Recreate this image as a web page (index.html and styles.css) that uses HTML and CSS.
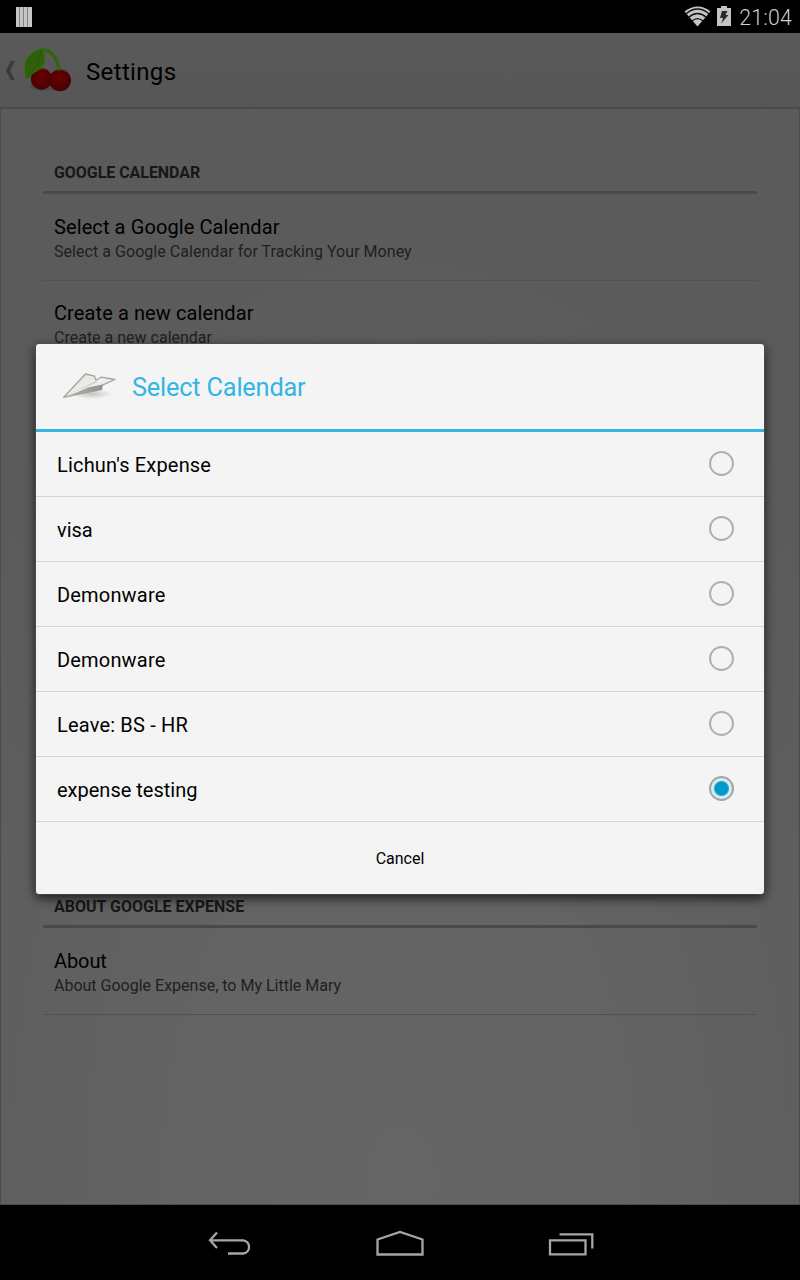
FILE: index.html
```html
<!DOCTYPE html>
<html lang="en">
<head>
<meta charset="utf-8">
<title>Settings</title>
<link rel="stylesheet" href="styles.css">
</head>
<body>
<div class="screen">
  <header class="status">
    <svg class="bars" width="18" height="22" viewBox="0 0 18 22"><path fill="#c6c6c6" d="M1 1h16v20H1z"/><path stroke="#808080" stroke-width="1" d="M4.500 1v20M8.500 1v20M12.500 1v20"/></svg>
    <div class="tray">
      <svg width="28" height="22" viewBox="0 0 28 22"><path fill="#c4c4c4" d="M.500 5.500Q14-4.500 26.500 5.500L13.500 20.500z"/><g fill="none" stroke="#111" stroke-width="1.300"><path d="M1.500 8.200Q13.500-2.200 25.500 8.200"/><path d="M4.500 11.400Q13.500 3.600 22.500 11.400"/><path d="M8 15Q13.500 10.200 19 15"/></g></svg>
      <svg width="14" height="22" viewBox="0 0 14 22"><path fill="#c4c4c4" d="M4 0h6v2h4v18H0V2h4z"/><path fill="#2a2a2a" d="M5 5h5.500L8.500 9H11.500L4.200 17.500 6.200 12H3z"/></svg>
      <span class="clock">21:04</span>
    </div>
  </header>
  <div class="actionbar">
    <svg class="up" width="10" height="20" viewBox="0 0 10 20"><path fill="#3a3a3a" d="M6 0H9.800L5 9.700l4.800 9.600H6L1 9.700z"/></svg>
    <svg class="logo" width="50" height="48" viewBox="0 0 50 48">
      <defs>
        <radialGradient id="cherry" cx=".5" cy=".4" r=".6"><stop offset="0" stop-color="#690101"/><stop offset=".75" stop-color="#510000"/><stop offset="1" stop-color="#3b0808"/></radialGradient>
        <linearGradient id="leaf" x1="0" y1="0" x2="1" y2="1"><stop offset="0" stop-color="#2d5a12"/><stop offset="1" stop-color="#2e6803"/></linearGradient>
      </defs>
      <ellipse cx="22" cy="39" rx="15" ry="5" fill="#4c4c4c"/>
      <circle cx="18.500" cy="32" r="10.700" fill="url(#cherry)"/>
      <circle cx="37" cy="33.300" r="11" fill="url(#cherry)"/>
      <path d="M12 23.500q5-2.500 10-1.500M31 24.300q6-4 12 .5" stroke="#5e3030" stroke-width="1" fill="none"/>
      <path d="M19 2.500C29 3.500 34.500 11 36.300 23.500" fill="none" stroke="#2f6504" stroke-width="3"/>
      <path d="M19.500 1C10 4 1 10 1.500 21c.2 5 1.300 9 2.800 12C8 24 20 24 21.800 14 22.200 8 21 3 19.500 1z" fill="url(#leaf)" stroke="#376e16" stroke-width="1"/>
      <path d="M19 3Q15 19 5 31" fill="none" stroke="#2a550d" stroke-width="1"/>
    </svg>
    <h1 class="heading">Settings</h1>
  </div>
  <main class="content">
    <h2 class="category">GOOGLE CALENDAR</h2>
    <div class="pref"><div class="name">Select a Google Calendar</div><div class="summary long">Select a Google Calendar for Tracking Your Money</div></div>
    <div class="pref second"><div class="name">Create a new calendar</div><div class="summary">Create a new calendar</div></div>
    <h2 class="category about">ABOUT GOOGLE EXPENSE</h2>
    <div class="pref"><div class="name tight">About</div><div class="summary">About Google Expense, to My Little Mary</div></div>
  </main>
  <nav class="nav">
    <svg width="46" height="26" viewBox="0 0 46 26" fill="none" stroke="#a6a6a6" stroke-width="2.300"><path d="M11 1.500 4 9.300 11 17M4 9.300h33.500a6.700 6.700 0 0 1 0 13.200H22"/></svg>
    <svg width="50" height="28" viewBox="0 0 50 28" fill="none" stroke="#a6a6a6" stroke-width="2.300"><path d="M2.500 24.500V9.500L25 2l22.500 7.500v15z"/></svg>
    <svg width="46" height="26" viewBox="0 0 46 26" fill="none" stroke="#a6a6a6" stroke-width="2.300"><path d="M2 9.300h35.500v14H2zM11.500 3.300h32.800v14.200"/></svg>
  </nav>
  <section class="dialog">
    <div class="title">
      <svg width="60" height="34" viewBox="0 0 60 34">
        <defs><linearGradient id="wing" x1="0" y1="0" x2="1" y2="1"><stop offset="0" stop-color="#dcddd8"/><stop offset=".5" stop-color="#efefec"/><stop offset="1" stop-color="#d0d2cc"/></linearGradient>
        <linearGradient id="keel" x1="0" y1="0" x2="1" y2="0"><stop offset="0" stop-color="#b4b6b1"/><stop offset="1" stop-color="#8f918c"/></linearGradient>
        <radialGradient id="shade"><stop offset="0" stop-color="#c4c4c4"/><stop offset="1" stop-color="#f4f4f4"/></radialGradient></defs>
        <ellipse cx="32" cy="24" rx="20" ry="5" fill="url(#shade)"/>
        <path fill="url(#wing)" stroke="#a3a5a0" stroke-width="1.300" stroke-linejoin="round" d="M3.500 27.500 25.500 4l9 2.200 1.500 4 5-3L55 9.500 42 15.300z"/>
        <path fill="#cdcfc9" d="M9 24 36 11l1 1.500z"/>
        <path fill="url(#keel)" d="M4 28 28 17.500 43 14.500l-1 5.500-14 3z"/>
      </svg>
      <span class="caption">Select Calendar</span>
    </div>
    <ul class="choices">
      <li><span>Lichun's Expense</span><i class="radio"></i></li>
      <li><span class="last">visa</span><i class="radio"></i></li>
      <li><span>Demonware</span><i class="radio"></i></li>
      <li><span>Demonware</span><i class="radio"></i></li>
      <li><span>Leave: BS - HR</span><i class="radio"></i></li>
      <li><span class="last">expense testing</span><i class="radio on"></i></li>
    </ul>
    <button class="cancel">Cancel</button>
  </section>
</div>
</body>
</html>
```
FILE: styles.css
```css
* { box-sizing: border-box; }
body { margin: 0; background: #000; font-family: Roboto, "Noto Sans", sans-serif; }
.screen { position: relative; width: 800px; height: 1280px; overflow: hidden; display: flex; flex-direction: column; }
.status { height: 33px; display: flex; justify-content: space-between; align-items: center; padding: 0 8px 0 15px; background: #000; }
.tray { display: flex; align-items: center; gap: 5px; }
.clock { margin-left: 3px; padding-top: 2px; font-size: 21.3px; line-height: 31px; letter-spacing: .2px; color: #cfcfcf; font-weight: 300; }
.actionbar { height: 76px; display: flex; align-items: center; padding-left: 5px; background: linear-gradient(#5a5a5a, #565656); border-bottom: 2px solid #4b4b4b; }
.up { margin: 2px 8px 0 0; }
.logo { margin: 2px 13px 0 0; }
.heading { margin: 3px 0 0; font-size: 24px; font-weight: 400; letter-spacing: .35px; color: #000; }
.content { height: 1096px; padding: 42px 42px 0; border: 1px solid #4b4b4b; border-top: 0; background: radial-gradient(ellipse 560px 950px at 50% 98%, #656565 0%, #646464 35%, #5b5b5b 100%); }
.category { margin: 0; height: 43px; padding: 13px 11px 0; font-size: 16px; line-height: 18px; font-weight: 700; letter-spacing: -.05px; color: #171717; border-bottom: 3px solid #4a4a4a; }
.pref { height: 87px; padding: 21px 11px 0; border-bottom: 1px solid #525252; }
.second { height: 86px; padding-top: 20px; }
.name { font-size: 20px; line-height: 24px; letter-spacing: .1px; color: #000; }
.tight { letter-spacing: -.1px; }
.summary { margin-top: 1px; font-size: 16px; line-height: 24px; color: #202020; }
.long { letter-spacing: .045px; }
.about { margin-top: 518px; letter-spacing: 0; }
.nav { height: 75px; display: flex; justify-content: center; align-items: center; gap: 123px; padding-top: 3px; background: #000; }
.dialog { position: absolute; left: 36px; top: 344px; width: 728px; height: 550px; background: #f4f4f4; border-radius: 3px; box-shadow: 0 0 0 1px rgba(80,80,80,.6), 0 4px 12px rgba(0,0,0,.75); display: flex; flex-direction: column; overflow: hidden; }
.title { height: 88px; display: flex; align-items: center; gap: 12px; padding-left: 24px; font-size: 25.3px; letter-spacing: -.18px; color: #33b5e5; border-bottom: 3px solid #33b5e5; }
.caption { padding-top: 2px; }
.choices { list-style: none; margin: 0; padding: 0; }
.choices li { height: 65px; display: flex; justify-content: space-between; align-items: center; padding: 2px 30px 0 21px; font-size: 20px; letter-spacing: .18px; color: #000; border-bottom: 1px solid #d6d6d6; }
.choices .last { letter-spacing: 0; }
.radio { width: 25px; height: 25px; margin-top: -3px; border: 2px solid #b0b0b0; border-radius: 50%; }
.radio.on { border-color: #a2a5a6; background: radial-gradient(circle, #0099cc 0 6px, #58a9c9 7.2px, #d3edf7 8px 100%); }
.cancel { flex: 1; border: 0; padding: 0; background: none; font: 16px Roboto, sans-serif; color: #000; }
```
